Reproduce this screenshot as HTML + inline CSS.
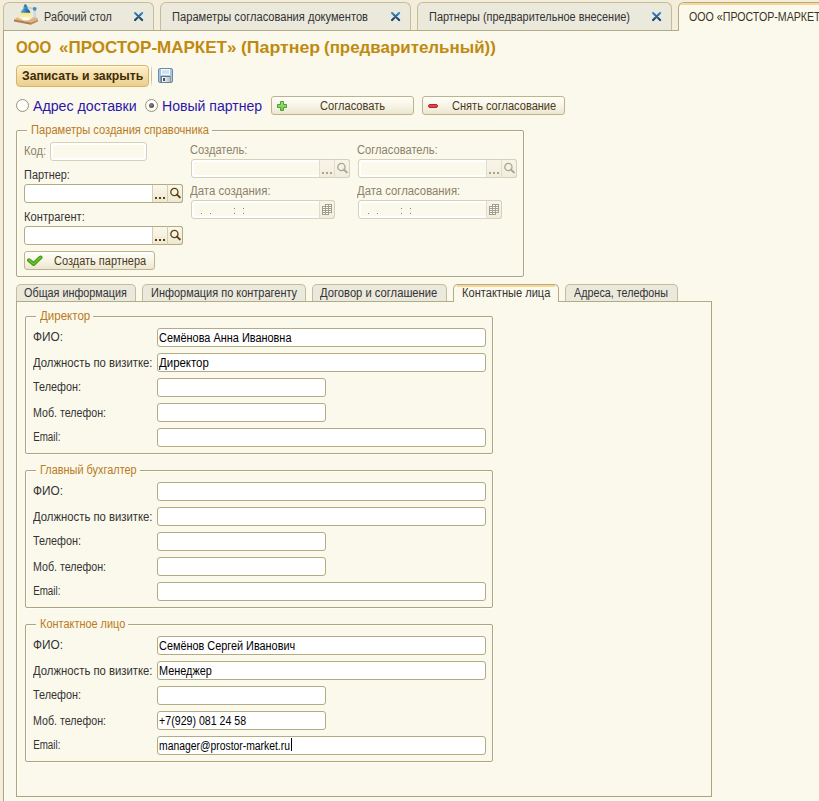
<!DOCTYPE html>
<html><head><meta charset="utf-8"><style>
html,body{margin:0;padding:0}
body{width:819px;height:801px;position:relative;overflow:hidden;background:#FBF9EC;font-family:"Liberation Sans", sans-serif}
div{box-sizing:content-box}
.t{position:absolute;white-space:pre}
svg{display:block}
</style></head><body>
<div style="position:absolute;left:0px;top:0px;width:819px;height:31px;background:#F3EDDA"></div>
<div style="position:absolute;left:3px;top:2px;width:149px;height:28px;background:#EBE8DC;border:1px solid #C4BC9A;border-bottom:none;border-radius:6px 6px 0 0"></div>
<div style="position:absolute;left:160px;top:2px;width:249px;height:28px;background:#EBE8DC;border:1px solid #C4BC9A;border-bottom:none;border-radius:6px 6px 0 0"></div>
<div style="position:absolute;left:417px;top:2px;width:253px;height:28px;background:#EBE8DC;border:1px solid #C4BC9A;border-bottom:none;border-radius:6px 6px 0 0"></div>
<div style="position:absolute;left:3px;top:30px;width:676px;height:1px;background:#B3AB86"></div>
<div style="position:absolute;left:678px;top:2px;width:160px;height:28px;background:#FBF9EC;border:1px solid #B3AB86;border-bottom:none;border-radius:6px 0 0 0"></div>
<div style="position:absolute;left:683px;top:3px;width:140px;height:2px;background:#FAD894"></div>
<div style="position:absolute;left:681px;top:4px;width:2px;height:1px;background:#FAD894"></div>
<svg style="position:absolute;left:13px;top:4px" width="26" height="22" viewBox="0 0 26 22">
<defs>
<linearGradient id="shade" x1="0" y1="0" x2="1" y2="0.3"><stop offset="0" stop-color="#9BD0EC"/><stop offset="0.5" stop-color="#3F8FC4"/><stop offset="1" stop-color="#1A5F94"/></linearGradient>
<linearGradient id="cone" x1="0" y1="0" x2="0" y2="1"><stop offset="0" stop-color="#F5E86A"/><stop offset="1" stop-color="#FBF4C8"/></linearGradient>
</defs>
<rect x="20.6" y="5" width="2.2" height="10" fill="#CFD3DA"/>
<path d="M13.5 3.6 L21.7 4.6" stroke="#C9CDD5" stroke-width="1.8"/>
<path d="M1 15.5 L4 13.5 L24 13.5 L25 15.5 L18 18.5 Z" fill="#DDB486"/>
<path d="M1 15.5 L18 18.5 L18 20.8 L1 17.6 Z" fill="#B47A49"/>
<path d="M18 18.5 L25 15.5 L25 17.5 L18 20.8 Z" fill="#C58D58"/>
<path d="M7.8 8.5 L17.2 8.5 L19.5 14.8 L5.5 14.8 Z" fill="url(#cone)" opacity="0.9"/>
<ellipse cx="12.8" cy="15" rx="4.5" ry="1.4" fill="#FFFFFF" opacity="0.9"/>
<path d="M10.6 2 L14.2 2 L14.8 5 C16.5 6 17.3 7.2 17.3 8.8 L7.8 8.8 C7.8 7 9 5.8 10.2 5 Z" fill="url(#shade)"/>
<circle cx="12.4" cy="1.6" r="1.3" fill="#2C74AE"/>
<circle cx="21.7" cy="4.8" r="1.9" fill="#3A8EC6"/>
</svg>
<div class="t" style="left:43.7px;top:10.74px;font-size:12px;line-height:12px;color:#333;transform:scaleX(0.8987);transform-origin:0.7px 0;">Рабочий стол</div>
<svg style="position:absolute;left:134px;top:11.5px" width="10" height="10" viewBox="0 0 10 10">
<defs><linearGradient id="xg134" x1="0" y1="0" x2="0" y2="1"><stop offset="0" stop-color="#3A86C4"/><stop offset="1" stop-color="#173E63"/></linearGradient></defs>
<path d="M1.1 1.1 L8.1 8.1 M8.1 1.1 L1.1 8.1" stroke="url(#xg134)" stroke-width="2.1" stroke-linecap="round"/></svg>
<div class="t" style="left:171.6px;top:10.74px;font-size:12px;line-height:12px;color:#333;transform:scaleX(0.9256);transform-origin:0.7px 0;">Параметры согласования документов</div>
<svg style="position:absolute;left:391px;top:11.5px" width="10" height="10" viewBox="0 0 10 10">
<defs><linearGradient id="xg391" x1="0" y1="0" x2="0" y2="1"><stop offset="0" stop-color="#3A86C4"/><stop offset="1" stop-color="#173E63"/></linearGradient></defs>
<path d="M1.1 1.1 L8.1 8.1 M8.1 1.1 L1.1 8.1" stroke="url(#xg391)" stroke-width="2.1" stroke-linecap="round"/></svg>
<div class="t" style="left:429px;top:10.74px;font-size:12px;line-height:12px;color:#333;transform:scaleX(0.9109);transform-origin:0.7px 0;">Партнеры (предварительное внесение)</div>
<svg style="position:absolute;left:652px;top:11.5px" width="10" height="10" viewBox="0 0 10 10">
<defs><linearGradient id="xg652" x1="0" y1="0" x2="0" y2="1"><stop offset="0" stop-color="#3A86C4"/><stop offset="1" stop-color="#173E63"/></linearGradient></defs>
<path d="M1.1 1.1 L8.1 8.1 M8.1 1.1 L1.1 8.1" stroke="url(#xg652)" stroke-width="2.1" stroke-linecap="round"/></svg>
<div class="t" style="left:689.2px;top:11.14px;font-size:12px;line-height:12px;color:#3A3428;transform:scaleX(0.8862);transform-origin:0.7px 0;">ООО «ПРОСТОР-МАРКЕТ»</div>
<div style="position:absolute;left:0px;top:31px;width:3px;height:770px;background:#F3EDDA"></div>
<div style="position:absolute;left:3px;top:30px;width:1px;height:771px;background:#ABA47F"></div>
<div style="position:absolute;left:4px;top:31px;width:1px;height:770px;background:#FFFFFA"></div>
<div class="t" style="left:15.900000000000002px;top:39.21px;font-size:17px;line-height:17px;color:#C08A10;transform:scaleX(0.8895);transform-origin:0.7px 0;font-weight:bold;">ООО</div>
<div class="t" style="left:58.599999999999994px;top:39.21px;font-size:17px;line-height:17px;color:#C08A10;transform:scaleX(1.0001);transform-origin:0.7px 0;font-weight:bold;">«ПРОСТОР-МАРКЕТ»</div>
<div class="t" style="left:241.20000000000002px;top:39.21px;font-size:17px;line-height:17px;color:#C08A10;transform:scaleX(1.0422);transform-origin:0.7px 0;font-weight:bold;">(Партнер</div>
<div class="t" style="left:324.0px;top:39.21px;font-size:17px;line-height:17px;color:#C08A10;transform:scaleX(0.9949);transform-origin:0.7px 0;font-weight:bold;">(предварительный))</div>
<div style="position:absolute;left:16px;top:65px;width:131px;height:20px;border:1px solid #D6B567;border-radius:4px;background:linear-gradient(#FDF0CC,#F3DDA6 55%,#EBCF8E);box-shadow:inset 0 1px 0 #FFF8E4"></div>
<div class="t" style="left:22px;top:69.94px;font-size:12px;line-height:12px;color:#3F2C0A;transform:scaleX(1.0192);transform-origin:0.7px 0;font-weight:bold;">Записать и закрыть</div>
<div style="position:absolute;left:151px;top:66px;width:1px;height:20px;background:linear-gradient(rgba(200,192,160,0.2),#C6BFA0 30%,#C6BFA0 70%,rgba(200,192,160,0.2))"></div>
<svg style="position:absolute;left:158px;top:68px" width="15" height="15" viewBox="0 0 15 15">
<defs><linearGradient id="shg" x1="0" y1="0" x2="1" y2="0"><stop offset="0" stop-color="#FFFFFF"/><stop offset="1" stop-color="#BDBDBD"/></linearGradient></defs>
<rect x="0.5" y="0.5" width="14" height="14" rx="1.5" fill="#A7C5E1" stroke="#6C8BA9"/>
<rect x="3" y="1" width="9" height="6" fill="#F6FAFD"/>
<rect x="4" y="2.5" width="7" height="1" fill="#A9CCDD"/>
<rect x="4" y="4.5" width="7" height="1" fill="#A9CCDD"/>
<rect x="2.5" y="8" width="10" height="6.5" fill="#617A90"/>
<rect x="4" y="9" width="8" height="5" fill="url(#shg)"/>
<rect x="5" y="10" width="2" height="3" fill="#3E5366"/>
</svg>
<div style="position:absolute;left:16.0px;top:99.0px;width:11px;height:11px;border:1px solid #9D9575;border-radius:50%;background:radial-gradient(circle at 50% 45%,#FFFFFF 55%,#ECE8DA)"></div>
<div class="t" style="left:33px;top:99.45px;font-size:14px;line-height:14px;color:#2B17A8;transform:scaleX(1.0132);transform-origin:0.7px 0;">Адрес доставки</div>
<div style="position:absolute;left:145.0px;top:99.0px;width:11px;height:11px;border:1px solid #9D9575;border-radius:50%;background:radial-gradient(circle at 50% 45%,#FFFFFF 55%,#ECE8DA)"></div>
<div style="position:absolute;left:149.0px;top:103.0px;width:5px;height:5px;border-radius:50%;background:radial-gradient(circle at 40% 40%,#8A8A8A,#333)"></div>
<div class="t" style="left:162px;top:99.45px;font-size:14px;line-height:14px;color:#2B17A8;transform:scaleX(1.0054);transform-origin:0.7px 0;">Новый партнер</div>
<div style="position:absolute;left:271px;top:96px;width:141px;height:17px;border:1px solid #BDB48E;border-radius:3px;background:linear-gradient(#FFFFFA,#F6F2E2 60%,#ECE6D0)"></div>
<svg style="position:absolute;left:277px;top:101px" width="10" height="10" viewBox="0 0 10 10">
<defs><linearGradient id="pg" x1="0" y1="0" x2="0" y2="1"><stop offset="0" stop-color="#A6E27E"/><stop offset="1" stop-color="#72C650"/></linearGradient></defs>
<path d="M3.5 0.5 H6.5 V3.5 H9.5 V6.5 H6.5 V9.5 H3.5 V6.5 H0.5 V3.5 H3.5 Z" fill="url(#pg)" stroke="#4AA232" stroke-width="1" stroke-linejoin="round"/>
</svg>
<div class="t" style="left:320px;top:99.84px;font-size:12px;line-height:12px;color:#4A3A1E;transform:scaleX(0.9244);transform-origin:0.7px 0;">Согласовать</div>
<div style="position:absolute;left:422px;top:96px;width:141px;height:17px;border:1px solid #BDB48E;border-radius:3px;background:linear-gradient(#FFFFFA,#F6F2E2 60%,#ECE6D0)"></div>
<div style="position:absolute;left:428px;top:104px;width:10px;height:4px;background:#E2454B;border:1px solid #B8242B;border-radius:2px;box-sizing:border-box"></div>
<div class="t" style="left:452px;top:99.84px;font-size:12px;line-height:12px;color:#4A3A1E;transform:scaleX(0.9198);transform-origin:0.7px 0;">Снять согласование</div>
<div style="position:absolute;left:16px;top:130px;width:506px;height:145px;border:1px solid #ADA581;border-radius:2px;box-shadow:inset 1px 1px 0 #FFFFF6, 1px 1px 0 #FFFFF6"></div>
<div style="position:absolute;left:26.8px;top:128px;width:185px;height:5px;background:#FBF9EC"></div>
<div class="t" style="left:30.7px;top:123.84px;font-size:12px;line-height:12px;color:#B97A22;transform:scaleX(0.9251);transform-origin:0.7px 0;">Параметры создания справочника</div>
<div class="t" style="left:23.8px;top:145.04px;font-size:12px;line-height:12px;color:#8C8169;transform:scaleX(0.9275);transform-origin:0.7px 0;">Код:</div>
<div style="position:absolute;left:50px;top:142px;width:95px;height:17px;border:1px solid #D6D1BC;border-radius:3px;background:#FBF9EC;box-shadow:inset 0 0 0 2px #FFFFFF"></div>
<div class="t" style="left:23.8px;top:168.64px;font-size:12px;line-height:12px;color:#333333;transform:scaleX(0.9068);transform-origin:0.7px 0;">Партнер:</div>
<div style="position:absolute;left:24px;top:184px;width:157px;height:17px;border:1px solid #B3AB82;border-radius:3px;background:#FFFFFF"></div>
<div style="position:absolute;left:152px;top:185px;width:14px;height:17px;border-left:1px solid #D6CEAE;background:linear-gradient(#FBF8EC,#EEE8D2)"></div>
<div style="position:absolute;left:155px;top:197px;width:2px;height:2px;background:#5A4012"></div>
<div style="position:absolute;left:159px;top:197px;width:2px;height:2px;background:#5A4012"></div>
<div style="position:absolute;left:163px;top:197px;width:2px;height:2px;background:#5A4012"></div>
<div style="position:absolute;left:167px;top:184px;width:14px;height:17px;border:1px solid #B3AB82;border-left:1px solid #D6CEAE;border-radius:0 3px 3px 0;background:linear-gradient(#FBF8EC,#EEE8D2)"></div>
<svg style="position:absolute;left:168px;top:186px" width="13" height="14" viewBox="0 0 13 14">
<circle cx="6.4" cy="6" r="3.6" fill="none" stroke="#5A4012" stroke-width="1.3"/>
<path d="M9 8.6 L11.8 11.4" stroke="#5A4012" stroke-width="2" stroke-linecap="round"/></svg>
<div class="t" style="left:23.8px;top:210.54px;font-size:12px;line-height:12px;color:#333333;transform:scaleX(0.9287);transform-origin:0.7px 0;">Контрагент:</div>
<div style="position:absolute;left:24px;top:226px;width:157px;height:17px;border:1px solid #B3AB82;border-radius:3px;background:#FFFFFF"></div>
<div style="position:absolute;left:152px;top:227px;width:14px;height:17px;border-left:1px solid #D6CEAE;background:linear-gradient(#FBF8EC,#EEE8D2)"></div>
<div style="position:absolute;left:155px;top:239px;width:2px;height:2px;background:#5A4012"></div>
<div style="position:absolute;left:159px;top:239px;width:2px;height:2px;background:#5A4012"></div>
<div style="position:absolute;left:163px;top:239px;width:2px;height:2px;background:#5A4012"></div>
<div style="position:absolute;left:167px;top:226px;width:14px;height:17px;border:1px solid #B3AB82;border-left:1px solid #D6CEAE;border-radius:0 3px 3px 0;background:linear-gradient(#FBF8EC,#EEE8D2)"></div>
<svg style="position:absolute;left:168px;top:228px" width="13" height="14" viewBox="0 0 13 14">
<circle cx="6.4" cy="6" r="3.6" fill="none" stroke="#5A4012" stroke-width="1.3"/>
<path d="M9 8.6 L11.8 11.4" stroke="#5A4012" stroke-width="2" stroke-linecap="round"/></svg>
<div style="position:absolute;left:24px;top:251px;width:129px;height:17px;border:1px solid #BDB48E;border-radius:3px;background:linear-gradient(#FFFFFA,#F6F2E2 60%,#ECE6D0)"></div>
<svg style="position:absolute;left:27px;top:253px" width="16" height="14" viewBox="0 0 16 14">
<path d="M2 7.2 L6.6 11 L13.6 4.4" fill="none" stroke="#3F9B16" stroke-width="3.8" stroke-linecap="round" stroke-linejoin="round"/>
<path d="M2 7.2 L6.6 11 L13.6 4.4" fill="none" stroke="#6DC52C" stroke-width="1.6" stroke-linecap="round" stroke-linejoin="round"/></svg>
<div class="t" style="left:54.3px;top:255.14px;font-size:12px;line-height:12px;color:#4A3A1E;transform:scaleX(0.9150);transform-origin:0.7px 0;">Создать партнера</div>
<div class="t" style="left:190.2px;top:143.84px;font-size:12px;line-height:12px;color:#8C8169;transform:scaleX(0.9232);transform-origin:0.7px 0;">Создатель:</div>
<div style="position:absolute;left:191px;top:159px;width:157px;height:17px;border:1px solid #D6D1BC;border-radius:3px;background:#FBF9EC;box-shadow:inset 0 0 0 2px #FFFFFF"></div>
<div style="position:absolute;left:319px;top:160px;width:14px;height:17px;border-left:1px solid #E2DDC8;background:linear-gradient(#F8F5E8,#F1EDDD)"></div>
<div style="position:absolute;left:322px;top:172px;width:2px;height:2px;background:#A9A594"></div>
<div style="position:absolute;left:326px;top:172px;width:2px;height:2px;background:#A9A594"></div>
<div style="position:absolute;left:330px;top:172px;width:2px;height:2px;background:#A9A594"></div>
<div style="position:absolute;left:334px;top:159px;width:14px;height:17px;border:1px solid #D6D1BC;border-left:1px solid #E2DDC8;border-radius:0 3px 3px 0;background:linear-gradient(#F8F5E8,#F1EDDD)"></div>
<svg style="position:absolute;left:335px;top:161px" width="13" height="14" viewBox="0 0 13 14">
<circle cx="6.4" cy="6" r="3.6" fill="none" stroke="#A9A594" stroke-width="1.3"/>
<path d="M9 8.6 L11.8 11.4" stroke="#A9A594" stroke-width="2" stroke-linecap="round"/></svg>
<div class="t" style="left:190.2px;top:184.74px;font-size:12px;line-height:12px;color:#8C8169;transform:scaleX(0.9515);transform-origin:0.7px 0;">Дата создания:</div>
<div style="position:absolute;left:191px;top:200px;width:142px;height:17px;border:1px solid #D6D1BC;border-radius:3px;background:#FBF9EC;box-shadow:inset 0 0 0 2px #FFFFFF"></div>
<div style="position:absolute;left:319px;top:200px;width:14px;height:17px;border:1px solid #D6D1BC;border-left:1px solid #E2DDC8;border-radius:0 3px 3px 0;background:linear-gradient(#F8F5E8,#F1EDDD)"></div>
<svg style="position:absolute;left:322px;top:204px" width="10" height="11" viewBox="0 0 10 11">
<path d="M3 0 H10 V9 H7 V11 H0 V2 H3 Z" fill="#A29E8C"/><rect x="4" y="1" width="2" height="1" fill="#FFFFFF"/><rect x="7" y="1" width="2" height="1" fill="#FFFFFF"/><rect x="1" y="3" width="2" height="1" fill="#FFFFFF"/><rect x="4" y="3" width="2" height="1" fill="#FFFFFF"/><rect x="7" y="3" width="2" height="1" fill="#FFFFFF"/><rect x="1" y="5" width="2" height="1" fill="#FFFFFF"/><rect x="4" y="5" width="2" height="1" fill="#FFFFFF"/><rect x="7" y="5" width="2" height="1" fill="#FFFFFF"/><rect x="1" y="7" width="2" height="1" fill="#FFFFFF"/><rect x="4" y="7" width="2" height="1" fill="#FFFFFF"/><rect x="7" y="7" width="2" height="1" fill="#FFFFFF"/><rect x="1" y="9" width="2" height="1" fill="#FFFFFF"/><rect x="4" y="9" width="2" height="1" fill="#FFFFFF"/></svg>
<div class="t" style="left:357.3px;top:143.74px;font-size:12px;line-height:12px;color:#8C8169;transform:scaleX(0.9276);transform-origin:0.7px 0;">Согласователь:</div>
<div style="position:absolute;left:358px;top:159px;width:157px;height:17px;border:1px solid #D6D1BC;border-radius:3px;background:#FBF9EC;box-shadow:inset 0 0 0 2px #FFFFFF"></div>
<div style="position:absolute;left:486px;top:160px;width:14px;height:17px;border-left:1px solid #E2DDC8;background:linear-gradient(#F8F5E8,#F1EDDD)"></div>
<div style="position:absolute;left:489px;top:172px;width:2px;height:2px;background:#A9A594"></div>
<div style="position:absolute;left:493px;top:172px;width:2px;height:2px;background:#A9A594"></div>
<div style="position:absolute;left:497px;top:172px;width:2px;height:2px;background:#A9A594"></div>
<div style="position:absolute;left:501px;top:159px;width:14px;height:17px;border:1px solid #D6D1BC;border-left:1px solid #E2DDC8;border-radius:0 3px 3px 0;background:linear-gradient(#F8F5E8,#F1EDDD)"></div>
<svg style="position:absolute;left:502px;top:161px" width="13" height="14" viewBox="0 0 13 14">
<circle cx="6.4" cy="6" r="3.6" fill="none" stroke="#A9A594" stroke-width="1.3"/>
<path d="M9 8.6 L11.8 11.4" stroke="#A9A594" stroke-width="2" stroke-linecap="round"/></svg>
<div class="t" style="left:357.3px;top:184.84px;font-size:12px;line-height:12px;color:#8C8169;transform:scaleX(0.9429);transform-origin:0.7px 0;">Дата согласования:</div>
<div style="position:absolute;left:358px;top:200px;width:142px;height:17px;border:1px solid #D6D1BC;border-radius:3px;background:#FBF9EC;box-shadow:inset 0 0 0 2px #FFFFFF"></div>
<div style="position:absolute;left:486px;top:200px;width:14px;height:17px;border:1px solid #D6D1BC;border-left:1px solid #E2DDC8;border-radius:0 3px 3px 0;background:linear-gradient(#F8F5E8,#F1EDDD)"></div>
<svg style="position:absolute;left:489px;top:204px" width="10" height="11" viewBox="0 0 10 11">
<path d="M3 0 H10 V9 H7 V11 H0 V2 H3 Z" fill="#A29E8C"/><rect x="4" y="1" width="2" height="1" fill="#FFFFFF"/><rect x="7" y="1" width="2" height="1" fill="#FFFFFF"/><rect x="1" y="3" width="2" height="1" fill="#FFFFFF"/><rect x="4" y="3" width="2" height="1" fill="#FFFFFF"/><rect x="7" y="3" width="2" height="1" fill="#FFFFFF"/><rect x="1" y="5" width="2" height="1" fill="#FFFFFF"/><rect x="4" y="5" width="2" height="1" fill="#FFFFFF"/><rect x="7" y="5" width="2" height="1" fill="#FFFFFF"/><rect x="1" y="7" width="2" height="1" fill="#FFFFFF"/><rect x="4" y="7" width="2" height="1" fill="#FFFFFF"/><rect x="7" y="7" width="2" height="1" fill="#FFFFFF"/><rect x="1" y="9" width="2" height="1" fill="#FFFFFF"/><rect x="4" y="9" width="2" height="1" fill="#FFFFFF"/></svg>
<div style="position:absolute;left:201px;top:213px;width:1px;height:1px;background:#8E7A8C"></div>
<div style="position:absolute;left:210px;top:213px;width:1px;height:1px;background:#8E7A8C"></div>
<div style="position:absolute;left:234px;top:213px;width:1px;height:1px;background:#8E7A8C"></div>
<div style="position:absolute;left:234px;top:208px;width:1px;height:1px;background:#8E7A8C"></div>
<div style="position:absolute;left:243px;top:213px;width:1px;height:1px;background:#8E7A8C"></div>
<div style="position:absolute;left:243px;top:208px;width:1px;height:1px;background:#8E7A8C"></div>
<div style="position:absolute;left:368px;top:213px;width:1px;height:1px;background:#8E7A8C"></div>
<div style="position:absolute;left:377px;top:213px;width:1px;height:1px;background:#8E7A8C"></div>
<div style="position:absolute;left:401px;top:213px;width:1px;height:1px;background:#8E7A8C"></div>
<div style="position:absolute;left:401px;top:208px;width:1px;height:1px;background:#8E7A8C"></div>
<div style="position:absolute;left:410px;top:213px;width:1px;height:1px;background:#8E7A8C"></div>
<div style="position:absolute;left:410px;top:208px;width:1px;height:1px;background:#8E7A8C"></div>
<div style="position:absolute;left:16px;top:301px;width:694px;height:494px;border:1px solid #ABA47F;border-top:1px solid #B3AB86;background:#FBF9EC;box-shadow:inset 1px 0 0 #FFFFFA"></div>
<div style="position:absolute;left:16px;top:284px;width:118px;height:16px;background:#EBE8DC;border:1px solid #C4BC9A;border-bottom:none;border-radius:5px 5px 0 0"></div>
<div class="t" style="left:23.900000000000002px;top:287.24px;font-size:12px;line-height:12px;color:#333;transform:scaleX(0.8998);transform-origin:0.7px 0;">Общая информация</div>
<div style="position:absolute;left:142px;top:284px;width:162px;height:16px;background:#EBE8DC;border:1px solid #C4BC9A;border-bottom:none;border-radius:5px 5px 0 0"></div>
<div class="t" style="left:150.70000000000002px;top:287.24px;font-size:12px;line-height:12px;color:#333;transform:scaleX(0.9132);transform-origin:0.7px 0;">Информация по контрагенту</div>
<div style="position:absolute;left:312px;top:284px;width:133px;height:16px;background:#EBE8DC;border:1px solid #C4BC9A;border-bottom:none;border-radius:5px 5px 0 0"></div>
<div class="t" style="left:320.40000000000003px;top:287.24px;font-size:12px;line-height:12px;color:#333;transform:scaleX(0.9334);transform-origin:0.7px 0;">Договор и соглашение</div>
<div style="position:absolute;left:453px;top:284px;width:104px;height:17px;background:#FBF9EC;border:1px solid #B3AB86;border-bottom:none;border-radius:5px 5px 0 0"></div>
<div style="position:absolute;left:457px;top:285px;width:98px;height:2px;background:#FAD894"></div>
<div class="t" style="left:461.6px;top:287.24px;font-size:12px;line-height:12px;color:#333;transform:scaleX(0.9227);transform-origin:0.7px 0;">Контактные лица</div>
<div style="position:absolute;left:565px;top:284px;width:111px;height:16px;background:#EBE8DC;border:1px solid #C4BC9A;border-bottom:none;border-radius:5px 5px 0 0"></div>
<div class="t" style="left:573.9px;top:287.24px;font-size:12px;line-height:12px;color:#333;transform:scaleX(0.8958);transform-origin:0.7px 0;">Адреса, телефоны</div>
<div style="position:absolute;left:25px;top:316px;width:466px;height:136px;border:1px solid #ADA581;border-radius:2px;box-shadow:inset 1px 1px 0 #FFFFF6, 1px 1px 0 #FFFFF6"></div>
<div style="position:absolute;left:36px;top:314px;width:57.3px;height:5px;background:#FBF9EC"></div>
<div class="t" style="left:39.9px;top:309.84px;font-size:12px;line-height:12px;color:#B97A22;transform:scaleX(0.9614);transform-origin:0.7px 0;">Директор</div>
<div class="t" style="left:33px;top:331.04px;font-size:12px;line-height:12px;color:#333333;transform:scaleX(0.9857);transform-origin:0.7px 0;">ФИО:</div>
<div style="position:absolute;left:157px;top:328px;width:327px;height:17px;border:1px solid #B3AB82;border-radius:3px;background:#FFFFFF"></div>
<div class="t" style="left:159.3px;top:332.24px;font-size:12px;line-height:12px;color:#000;transform:scaleX(0.9094);transform-origin:0.7px 0;">Семёнова Анна Ивановна</div>
<div class="t" style="left:33px;top:356.94px;font-size:12px;line-height:12px;color:#333333;transform:scaleX(0.9422);transform-origin:0.7px 0;">Должность по визитке:</div>
<div style="position:absolute;left:157px;top:353px;width:327px;height:17px;border:1px solid #B3AB82;border-radius:3px;background:#FFFFFF"></div>
<div class="t" style="left:159.3px;top:357.24px;font-size:12px;line-height:12px;color:#000;transform:scaleX(0.9516);transform-origin:0.7px 0;">Директор</div>
<div class="t" style="left:33px;top:381.04px;font-size:12px;line-height:12px;color:#333333;transform:scaleX(0.9017);transform-origin:0.7px 0;">Телефон:</div>
<div style="position:absolute;left:157px;top:378px;width:167px;height:17px;border:1px solid #B3AB82;border-radius:3px;background:#FFFFFF"></div>
<div class="t" style="left:33px;top:406.94px;font-size:12px;line-height:12px;color:#333333;transform:scaleX(0.8870);transform-origin:0.7px 0;">Моб. телефон:</div>
<div style="position:absolute;left:157px;top:403px;width:167px;height:17px;border:1px solid #B3AB82;border-radius:3px;background:#FFFFFF"></div>
<div class="t" style="left:33px;top:431.04px;font-size:12px;line-height:12px;color:#333333;transform:scaleX(0.8193);transform-origin:0.7px 0;">Email:</div>
<div style="position:absolute;left:157px;top:428px;width:327px;height:17px;border:1px solid #B3AB82;border-radius:3px;background:#FFFFFF"></div>
<div style="position:absolute;left:25px;top:470px;width:466px;height:136px;border:1px solid #ADA581;border-radius:2px;box-shadow:inset 1px 1px 0 #FFFFF6, 1px 1px 0 #FFFFF6"></div>
<div style="position:absolute;left:36px;top:468px;width:103.7px;height:5px;background:#FBF9EC"></div>
<div class="t" style="left:39.9px;top:463.84px;font-size:12px;line-height:12px;color:#B97A22;transform:scaleX(0.9090);transform-origin:0.7px 0;">Главный бухгалтер</div>
<div class="t" style="left:33px;top:485.04px;font-size:12px;line-height:12px;color:#333333;transform:scaleX(0.9857);transform-origin:0.7px 0;">ФИО:</div>
<div style="position:absolute;left:157px;top:482px;width:327px;height:17px;border:1px solid #B3AB82;border-radius:3px;background:#FFFFFF"></div>
<div class="t" style="left:33px;top:510.94px;font-size:12px;line-height:12px;color:#333333;transform:scaleX(0.9422);transform-origin:0.7px 0;">Должность по визитке:</div>
<div style="position:absolute;left:157px;top:507px;width:327px;height:17px;border:1px solid #B3AB82;border-radius:3px;background:#FFFFFF"></div>
<div class="t" style="left:33px;top:535.04px;font-size:12px;line-height:12px;color:#333333;transform:scaleX(0.9017);transform-origin:0.7px 0;">Телефон:</div>
<div style="position:absolute;left:157px;top:532px;width:167px;height:17px;border:1px solid #B3AB82;border-radius:3px;background:#FFFFFF"></div>
<div class="t" style="left:33px;top:560.94px;font-size:12px;line-height:12px;color:#333333;transform:scaleX(0.8870);transform-origin:0.7px 0;">Моб. телефон:</div>
<div style="position:absolute;left:157px;top:557px;width:167px;height:17px;border:1px solid #B3AB82;border-radius:3px;background:#FFFFFF"></div>
<div class="t" style="left:33px;top:585.04px;font-size:12px;line-height:12px;color:#333333;transform:scaleX(0.8193);transform-origin:0.7px 0;">Email:</div>
<div style="position:absolute;left:157px;top:582px;width:327px;height:17px;border:1px solid #B3AB82;border-radius:3px;background:#FFFFFF"></div>
<div style="position:absolute;left:25px;top:624px;width:466px;height:136px;border:1px solid #ADA581;border-radius:2px;box-shadow:inset 1px 1px 0 #FFFFF6, 1px 1px 0 #FFFFF6"></div>
<div style="position:absolute;left:36px;top:622px;width:92.3px;height:5px;background:#FBF9EC"></div>
<div class="t" style="left:39.9px;top:617.84px;font-size:12px;line-height:12px;color:#B97A22;transform:scaleX(0.9100);transform-origin:0.7px 0;">Контактное лицо</div>
<div class="t" style="left:33px;top:639.04px;font-size:12px;line-height:12px;color:#333333;transform:scaleX(0.9857);transform-origin:0.7px 0;">ФИО:</div>
<div style="position:absolute;left:157px;top:636px;width:327px;height:17px;border:1px solid #B3AB82;border-radius:3px;background:#FFFFFF"></div>
<div class="t" style="left:159.3px;top:640.24px;font-size:12px;line-height:12px;color:#000;transform:scaleX(0.9057);transform-origin:0.7px 0;">Семёнов Сергей Иванович</div>
<div class="t" style="left:33px;top:664.94px;font-size:12px;line-height:12px;color:#333333;transform:scaleX(0.9422);transform-origin:0.7px 0;">Должность по визитке:</div>
<div style="position:absolute;left:157px;top:661px;width:327px;height:17px;border:1px solid #B3AB82;border-radius:3px;background:#FFFFFF"></div>
<div class="t" style="left:159.3px;top:665.24px;font-size:12px;line-height:12px;color:#000;transform:scaleX(0.9053);transform-origin:0.7px 0;">Менеджер</div>
<div class="t" style="left:33px;top:689.04px;font-size:12px;line-height:12px;color:#333333;transform:scaleX(0.9017);transform-origin:0.7px 0;">Телефон:</div>
<div style="position:absolute;left:157px;top:686px;width:167px;height:17px;border:1px solid #B3AB82;border-radius:3px;background:#FFFFFF"></div>
<div class="t" style="left:33px;top:714.94px;font-size:12px;line-height:12px;color:#333333;transform:scaleX(0.8870);transform-origin:0.7px 0;">Моб. телефон:</div>
<div style="position:absolute;left:157px;top:711px;width:167px;height:17px;border:1px solid #B3AB82;border-radius:3px;background:#FFFFFF"></div>
<div class="t" style="left:159.3px;top:715.24px;font-size:12px;line-height:12px;color:#000;transform:scaleX(0.8848);transform-origin:0.7px 0;">+7(929) 081 24 58</div>
<div class="t" style="left:33px;top:739.04px;font-size:12px;line-height:12px;color:#333333;transform:scaleX(0.8193);transform-origin:0.7px 0;">Email:</div>
<div style="position:absolute;left:157px;top:736px;width:327px;height:17px;border:1px solid #B3AB82;border-radius:3px;background:#FFFFFF"></div>
<div class="t" style="left:159.3px;top:740.24px;font-size:12px;line-height:12px;color:#000;transform:scaleX(0.8633);transform-origin:0.7px 0;">manager@prostor-market.ru</div>
<div style="position:absolute;left:291px;top:738px;width:1px;height:13px;background:#000"></div>
</body></html>
